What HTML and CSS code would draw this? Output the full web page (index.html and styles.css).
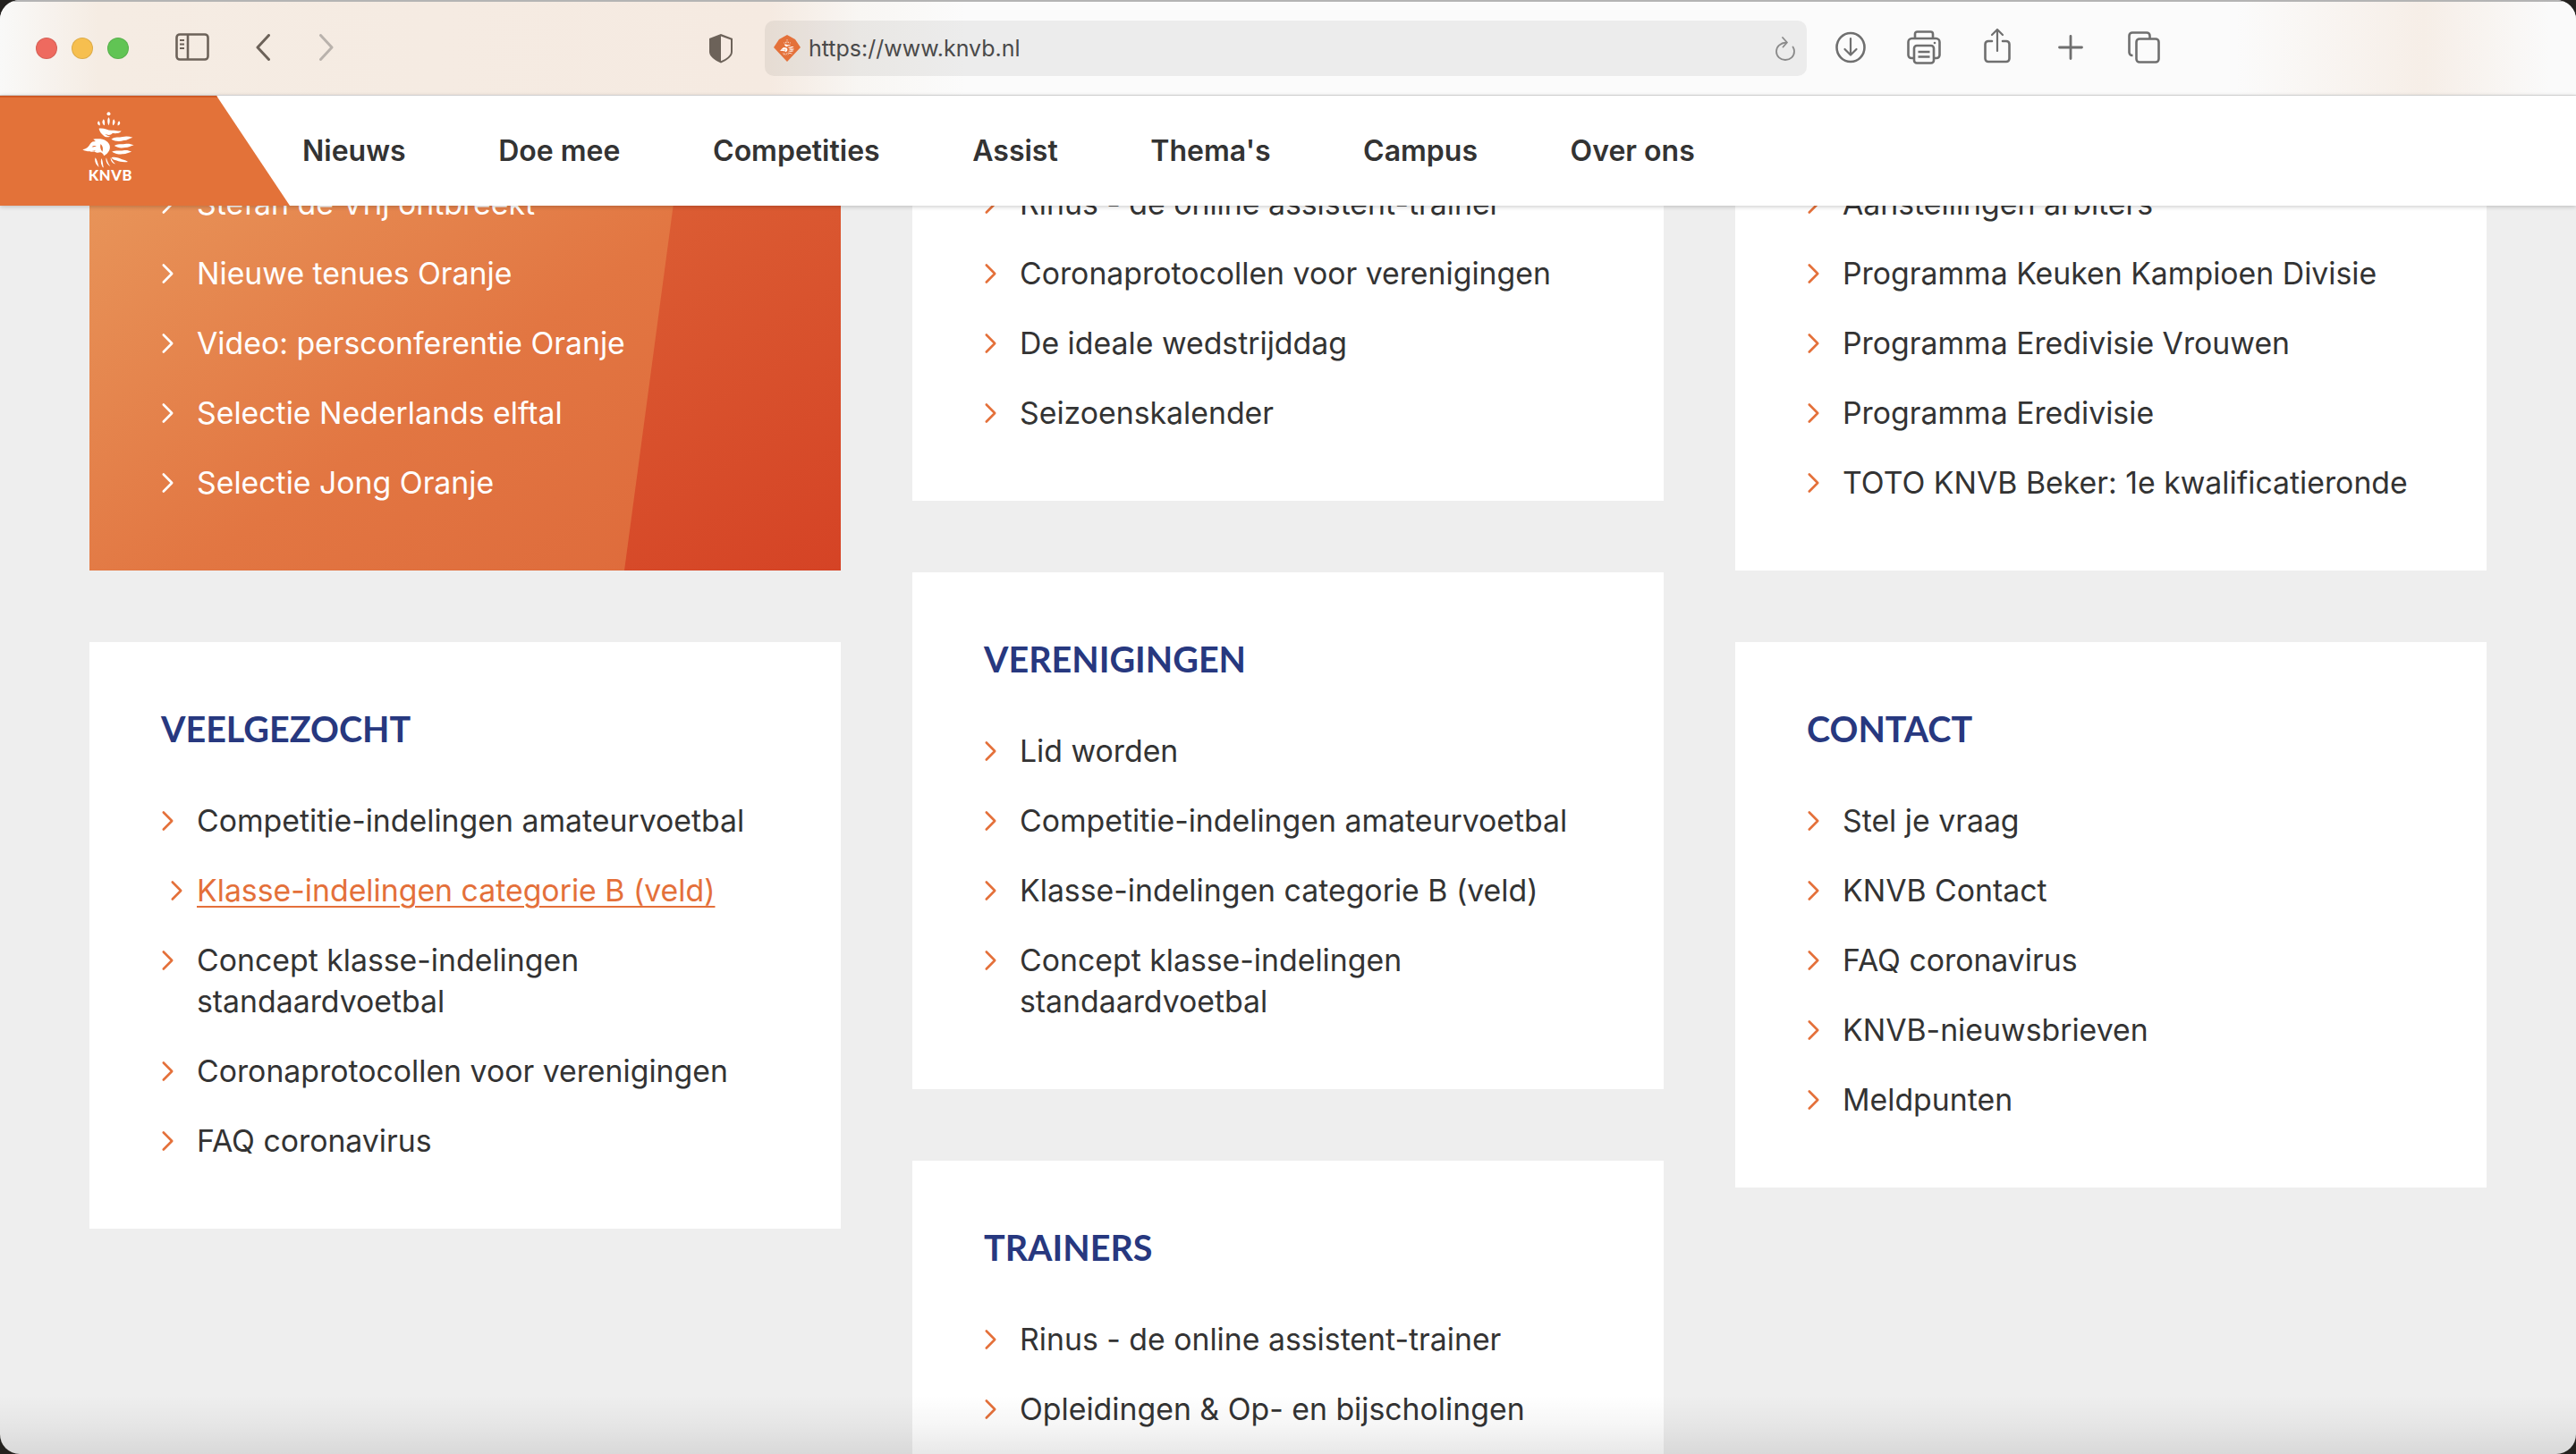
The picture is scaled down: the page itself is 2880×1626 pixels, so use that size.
FILE: index.html
```html
<!DOCTYPE html>
<html lang="nl">
<head>
<meta charset="utf-8">
<title>KNVB</title>
<link rel="stylesheet" href="styles.css">
</head>
<body>
<svg class="defs" width="0" height="0" aria-hidden="true">
  <defs>
    <symbol id="lion" viewBox="120 55 190 190">
      <circle cx="215" cy="64" r="6"/>
      <path d="M215 76c5 5 5 17 0 27c-5-10-5-22 0-27zM198 82c4 4 5 13 3 21c-8-4-10-14-3-21zM232 82c7 7 5 17-3 21c-2-8-1-17 3-21zM181 88c4 3 6 9 4 16c-8-3-10-11-4-16zM250 88c6 5 4 13-4 16c-2-7 0-13 4-16z"/>
      <path d="M182 114c18-3 30 8 46 6c10-2 18 4 30 2c-8 10-20 8-30 8c-6 8-18 6-26 2c6 6 12 8 18 8c-6 4-16 4-22-2c-8-6-14-14-16-24z"/>
      <path d="M224 150c12-10 26-4 38-8c10-3 22-2 34 2c-12 3-18 10-30 10c-14 4-28 4-42-4z"/>
      <path d="M234 172c12-8 24-4 36-6c10-2 20 0 30 4c-10 3-18 8-30 8c-12 2-24 2-36-6z"/>
      <path d="M226 192c14-6 26-2 38-4c10-2 20 0 28 4c-10 2-18 8-28 8c-12 1-26 0-38-8z"/>
      <path d="M224 212c14-4 24 2 36 6c8 2 14 4 20 8c-14 2-28 0-38-4c-8-2-14-4-18-10z"/>
      <path fill-rule="evenodd" d="M127 185c12-2 20-8 26-20c4-6 10-8 18-8l-8-7c14-2 34-2 44 6c12 8 15 20 10 32c-4 8-10 14-18 18c-2-6-6-10-12-12c-8 2-16 2-22-4c-12 2-28 2-38-5zM158 176c5 1 11 0 16-3c-6-2-12-1-16 3zM188 166c7 6 9 15 6 26c-7-7-9-17-6-26zM148 190c8 1 16 0 23-4c-5 7-14 9-23 4z"/>
      <path d="M170 212c6 8 8 18 12 32c-10-8-16-20-12-32zM191 214c5 10 4 22 8 36c-9-10-13-24-8-36zM207 212c3 10 6 20 14 30c-11-6-18-18-14-30zM222 212c4 8 8 14 16 22c-11-3-18-12-16-22z"/>
    </symbol>
    <symbol id="chev" viewBox="0 0 15 24">
      <path d="M2.800 2.500l9.400 9.500-9.400 9.500" fill="none" stroke="currentColor" stroke-width="2.600" stroke-linecap="round" stroke-linejoin="round"/>
    </symbol>
  </defs>
</svg>
<div class="window">
  <header class="toolbar">
    <div class="lights">
      <span class="light light-red"></span>
      <span class="light light-yellow"></span>
      <span class="light light-green"></span>
    </div>
    <svg class="tb-sidebar" width="38" height="32" viewBox="0 0 38 32" fill="none" stroke="#6c6259" stroke-width="2.6">
      <rect x="1.5" y="1.5" width="35" height="28" rx="3.5"/>
      <path d="M14 2v27"/>
      <path d="M5 8h5M5 12.5h5M5 17h5" stroke-width="2"/>
    </svg>
    <svg class="tb-back" width="16" height="30" viewBox="0 0 16 30" fill="none" stroke="#6c6259" stroke-width="3" stroke-linecap="round" stroke-linejoin="round">
      <path d="M14.5 1.5L2 15l12.500 13.500"/>
    </svg>
    <svg class="tb-forward" width="16" height="30" viewBox="0 0 16 30" fill="none" stroke="#b9b2ac" stroke-width="3" stroke-linecap="round" stroke-linejoin="round">
      <path d="M1.500 1.500L14 15 1.500 28.500"/>
    </svg>
    <svg class="tb-shield" width="28" height="34" viewBox="0 0 28 34">
      <path d="M14 1L27 6v15c0 5-6 9.500-13 12.500C7 30.500 1 26 1 21V6z" fill="#6c6259"/>
      <path d="M14 3.500L25 7.500v13.500c0 4-5 7.800-11 10.300z" fill="#f6eae2"/>
    </svg>
    <div class="address">
      <svg class="favicon" width="30" height="30" viewBox="0 0 30 30">
        <polygon points="15,0 24,5 30,14 15,30 0,14 6,5" fill="#e4713a"/>
        <use href="#lion" x="6" y="5" width="18" height="18" fill="#fff"/>
      </svg>
      <span class="url">https://www.knvb.nl</span>
      <svg class="reload" width="24" height="27" viewBox="0 0 24 27" fill="none" stroke="#8a8a8a" stroke-width="1.800" stroke-linecap="round" stroke-linejoin="round">
        <path d="M13 6.500C6.500 7 2 11 2 16.500 2 22 6.500 26 12 26s10-4 10-9.500c0-2-.5-3.500-1.500-5"/>
        <path d="M9 1l5 5.500L9.500 11.500"/>
      </svg>
    </div>
    <div class="tb-actions">
      <span class="tb-btn">
        <svg width="34" height="36" viewBox="0 0 34 36" fill="none" stroke="#6f6f6f" stroke-width="2.600" stroke-linecap="round" stroke-linejoin="round">
          <ellipse cx="17" cy="18" rx="15.500" ry="16"/>
          <path d="M17 8v18M10.500 20L17 26.500 23.500 20" stroke-width="2.200"/>
        </svg>
      </span>
      <span class="tb-btn">
        <svg width="38" height="38" viewBox="0 0 38 38" fill="none" stroke="#6f6f6f" stroke-width="2.600" stroke-linejoin="round">
          <path d="M9 9V4c0-1.500 1-2.500 2.500-2.500h15C28 1.500 29 2.500 29 4v5"/>
          <path d="M8 31H5c-2 0-3.500-1.500-3.500-3.500V13c0-2.200 1.800-4 4-4h27c2.200 0 4 1.800 4 4v14.500c0 2-1.500 3.500-3.500 3.500h-3"/>
          <rect x="8" y="17" width="22" height="19.500" rx="3"/>
          <path d="M12.500 24h13M12.500 29.500h13"/>
          <circle cx="31" cy="14" r="1.300" fill="#6f6f6f" stroke="none"/>
        </svg>
      </span>
      <span class="tb-btn tb-btn-share">
        <svg width="30" height="40" viewBox="0 0 30 40" fill="none" stroke="#6f6f6f" stroke-width="2.600" stroke-linecap="round" stroke-linejoin="round">
          <path d="M9 15H5c-2 0-3.500 1.500-3.500 3.500v16C1.500 36.500 3 38 5 38h20c2 0 3.500-1.500 3.500-3.500v-16c0-2-1.500-3.500-3.500-3.500h-4"/>
          <path d="M15 26V2M9 8l6-6 6 6" stroke-width="2.200"/>
        </svg>
      </span>
      <span class="tb-btn">
        <svg width="28" height="28" viewBox="0 0 28 28" fill="none" stroke="#6f6f6f" stroke-width="2.800" stroke-linecap="round">
          <path d="M14 1.500v25M1.500 14h25"/>
        </svg>
      </span>
      <span class="tb-btn">
        <svg width="36" height="36" viewBox="0 0 36 36" fill="none" stroke="#6f6f6f" stroke-width="2.600" stroke-linejoin="round">
          <path d="M5.500 27H5c-2 0-3.500-1.500-3.500-3.500V5C1.500 3 3 1.500 5 1.500h16c2 0 3.500 1.500 3.500 3.500v3"/>
          <rect x="9.500" y="8.500" width="25" height="26" rx="3.500"/>
        </svg>
      </span>
    </div>
  </header>

  <div class="site-header">
    <a class="brand">
      <svg class="brand-logo" width="63" height="86" viewBox="120 55 190 258" fill="#fff">
        <use href="#lion" x="120" y="55" width="190" height="190"/>
        <text class="brand-name" x="221" y="289" text-anchor="middle">KNVB</text>
      </svg>
    </a>
    <nav class="nav">
      <a>Nieuws</a>
      <a>Doe mee</a>
      <a>Competities</a>
      <a>Assist</a>
      <a>Thema's</a>
      <a>Campus</a>
      <a>Over ons</a>
    </nav>
  </div>

  <main class="content">
    <div class="column">
      <section class="card card-orange card-cut">
        <ul class="links">
          <li><svg class="chev"><use href="#chev"/></svg><a>Stefan de Vrij ontbreekt</a></li>
          <li><svg class="chev"><use href="#chev"/></svg><a>Nieuwe tenues Oranje</a></li>
          <li><svg class="chev"><use href="#chev"/></svg><a>Video: persconferentie Oranje</a></li>
          <li><svg class="chev"><use href="#chev"/></svg><a>Selectie Nederlands elftal</a></li>
          <li><svg class="chev"><use href="#chev"/></svg><a>Selectie Jong Oranje</a></li>
        </ul>
      </section>
      <section class="card">
        <h2>VEELGEZOCHT</h2>
        <ul class="links">
          <li><svg class="chev"><use href="#chev"/></svg><a>Competitie-indelingen amateurvoetbal</a></li>
          <li class="is-hover"><svg class="chev"><use href="#chev"/></svg><a>Klasse-indelingen categorie B (veld)</a></li>
          <li><svg class="chev"><use href="#chev"/></svg><a>Concept klasse-indelingen standaardvoetbal</a></li>
          <li><svg class="chev"><use href="#chev"/></svg><a>Coronaprotocollen voor verenigingen</a></li>
          <li><svg class="chev"><use href="#chev"/></svg><a>FAQ coronavirus</a></li>
        </ul>
      </section>
    </div>
    <div class="column">
      <section class="card card-cut">
        <ul class="links">
          <li><svg class="chev"><use href="#chev"/></svg><a>Rinus - de online assistent-trainer</a></li>
          <li><svg class="chev"><use href="#chev"/></svg><a>Coronaprotocollen voor verenigingen</a></li>
          <li><svg class="chev"><use href="#chev"/></svg><a>De ideale wedstrijddag</a></li>
          <li><svg class="chev"><use href="#chev"/></svg><a>Seizoenskalender</a></li>
        </ul>
      </section>
      <section class="card">
        <h2>VERENIGINGEN</h2>
        <ul class="links">
          <li><svg class="chev"><use href="#chev"/></svg><a>Lid worden</a></li>
          <li><svg class="chev"><use href="#chev"/></svg><a>Competitie-indelingen amateurvoetbal</a></li>
          <li><svg class="chev"><use href="#chev"/></svg><a>Klasse-indelingen categorie B (veld)</a></li>
          <li><svg class="chev"><use href="#chev"/></svg><a>Concept klasse-indelingen standaardvoetbal</a></li>
        </ul>
      </section>
      <section class="card">
        <h2>TRAINERS</h2>
        <ul class="links">
          <li><svg class="chev"><use href="#chev"/></svg><a>Rinus - de online assistent-trainer</a></li>
          <li><svg class="chev"><use href="#chev"/></svg><a>Opleidingen &amp; Op- en bijscholingen</a></li>
        </ul>
      </section>
    </div>
    <div class="column">
      <section class="card card-cut">
        <ul class="links">
          <li><svg class="chev"><use href="#chev"/></svg><a>Aanstellingen arbiters</a></li>
          <li><svg class="chev"><use href="#chev"/></svg><a>Programma Keuken Kampioen Divisie</a></li>
          <li><svg class="chev"><use href="#chev"/></svg><a>Programma Eredivisie Vrouwen</a></li>
          <li><svg class="chev"><use href="#chev"/></svg><a>Programma Eredivisie</a></li>
          <li><svg class="chev"><use href="#chev"/></svg><a>TOTO KNVB Beker: 1e kwalificatieronde</a></li>
        </ul>
      </section>
      <section class="card">
        <h2>CONTACT</h2>
        <ul class="links">
          <li><svg class="chev"><use href="#chev"/></svg><a>Stel je vraag</a></li>
          <li><svg class="chev"><use href="#chev"/></svg><a>KNVB Contact</a></li>
          <li><svg class="chev"><use href="#chev"/></svg><a>FAQ coronavirus</a></li>
          <li><svg class="chev"><use href="#chev"/></svg><a>KNVB-nieuwsbrieven</a></li>
          <li><svg class="chev"><use href="#chev"/></svg><a>Meldpunten</a></li>
        </ul>
      </section>
    </div>
  </main>
  <div class="bottom-fade"></div>
</div>
</body>
</html>
```
FILE: styles.css
```css
* { box-sizing: border-box; }
html, body { margin: 0; height: 100%; }
body {
  background: #24221f;
  font-family: "Inter", "Liberation Sans", sans-serif;
  color: #333;
  overflow: hidden;
}
.defs { position: absolute; }
.window {
  position: relative;
  height: 1626px;
  border-radius: 22px;
  overflow: hidden;
  background: #eee;
  display: flex;
  flex-direction: column;
}

/* browser toolbar */
.toolbar {
  flex: none;
  height: 107px;
  border-top: 2px solid #b4b4b4;
  border-bottom: 1px solid #dcdcdc;
  padding-left: 40px;
  display: flex;
  align-items: center;
  background: linear-gradient(90deg, #f9f9f8 0, #f5ece3 110px, #f5eae1 860px, #f8f6f3 960px, #fbfbfb 1080px, #fbfbfb 2500px, #f6eee7 2710px, #fafafa 2850px);
}
.lights { display: flex; gap: 16px; }
.light { width: 24px; height: 24px; border-radius: 50%; border: 1px solid rgba(0,0,0,.1); }
.light-red { background: #ee6a5f; }
.light-yellow { background: #f6bf4f; }
.light-green { background: #61c454; }
.tb-sidebar { margin-left: 52px; margin-top: -2px; }
.tb-back { margin-left: 52px; margin-top: -2px; }
.tb-forward { margin-left: 55px; margin-top: -2px; }
.tb-shield { margin-left: 419px; }
.address {
  margin-left: 35px;
  width: 1165px;
  height: 62px;
  border-radius: 10px;
  background: rgba(0,0,0,.06);
  display: flex;
  align-items: center;
  padding: 0 12px 0 10px;
}
.favicon { flex: none; }
.url {
  margin-left: 9px;
  font-size: 25px;
  color: #4a4a4a;
  flex: 1;
}
.reload { flex: none; }
.tb-actions { display: flex; margin-left: 8px; }
.tb-btn { width: 82px; display: flex; justify-content: center; align-items: center; margin-top: -2px; }
.tb-btn-share { margin-top: -6px; }

/* site header */
.site-header {
  position: relative;
  z-index: 2;
  flex: none;
  height: 123px;
  background: #fff;
  display: flex;
  align-items: center;
  box-shadow: 0 1px 5px rgba(0,0,0,.22);
}
.brand {
  flex: none;
  align-self: stretch;
  width: 324px;
  background: #e37239;
  border-top: 2px solid #cf5a25;
  clip-path: polygon(0 0, 242px 0, 100% 100%, 0 100%);
  padding: 15px 0 0 90px;
}
.brand-logo { display: block; }
.brand-name { font-family: "Lato", sans-serif; font-weight: 900; font-size: 50px; letter-spacing: 2px; }
.nav { display: flex; gap: 103.6px; margin-left: 14px; }
.nav a { font-size: 32px; font-weight: 600; color: #333; line-height: 46px; }

/* page content */
.content {
  flex: 1;
  min-height: 0;
  margin-top: -25px;
  padding: 0 100px;
  display: grid;
  grid-template-columns: repeat(3, 840px);
  column-gap: 80px;
  align-items: start;
}
.column { display: flex; flex-direction: column; gap: 80px; }
.card {
  position: relative;
  background: #fff;
  padding: 72px 80px 75px;
}
.card-cut { padding-top: 0; }
.card h2 {
  margin: 0 0 55px;
  font-family: "Lato", sans-serif;
  font-weight: 700;
  font-size: 39.5px;
  line-height: 50px;
  color: #27387f;
}
.links { position: relative; list-style: none; margin: 0; padding: 0; display: flex; flex-direction: column; gap: 32px; }
.links li { display: flex; align-items: flex-start; gap: 25px; font-size: 33.8px; line-height: 46px; }
.chev { flex: none; width: 15px; height: 24px; margin-top: 11px; color: #e4703a; }
.is-hover .chev { margin-left: 10px; margin-right: -10px; }
.is-hover a { color: #e4703a; text-decoration: underline; text-decoration-thickness: 2px; text-underline-offset: 5px; }

.card-orange { background: linear-gradient(150deg, #e0703e 0, #d54325 100%); color: #fff; }
.card-orange::before {
  content: "";
  position: absolute;
  inset: 0;
  background: linear-gradient(145deg, #e8955a 0, #e27642 50%, #dd6739 100%);
  clip-path: polygon(0 0, 656px 0, 598px 100%, 0 100%);
}
.card-orange .chev { color: #fff; }

.bottom-fade {
  position: absolute;
  left: 0;
  right: 0;
  bottom: 0;
  height: 66px;
  background: linear-gradient(180deg, rgba(0,0,0,0) 0, rgba(0,0,0,.035) 50%, rgba(0,0,0,.09) 100%);
  pointer-events: none;
}
```
